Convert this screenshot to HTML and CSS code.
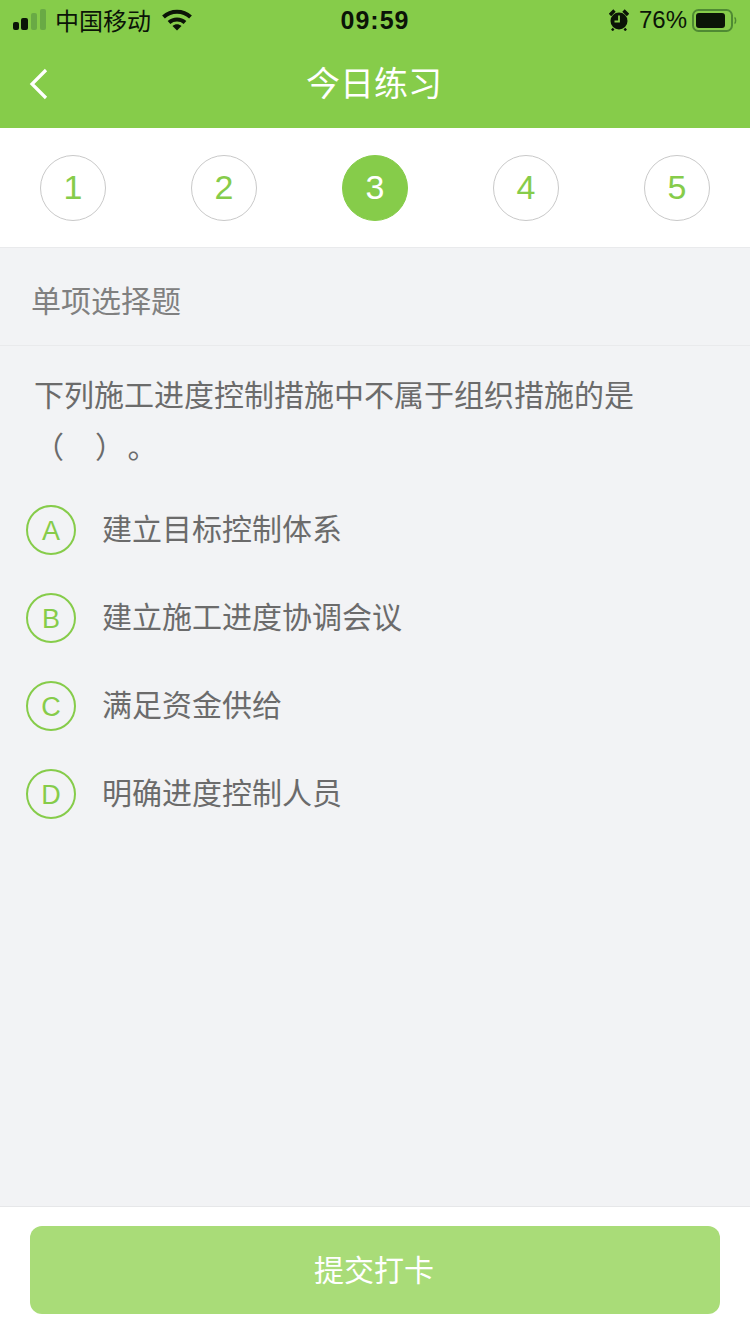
FILE: index.html
```html
<!DOCTYPE html>
<html lang="zh-CN">
<head>
  <meta charset="UTF-8" />
  <meta name="viewport" content="width=device-width, initial-scale=1.0"/>
  <title>今日练习</title>
  <link rel="stylesheet" href="styles.css">
</head>
<body>
  <div class="page">
    <header class="top">
      <!-- 状态栏 -->
      <div class="status">
        <div class="status-left">
          <svg class="signal" width="34" height="22" viewBox="0 0 34 22">
            <rect x="0" y="13" width="6" height="8" rx="2" fill="#0b1407"/>
            <rect x="8" y="9" width="7" height="12" rx="2" fill="#0b1407"/>
            <rect x="18" y="4" width="6" height="17" rx="2" fill="#69aa45"/>
            <rect x="27" y="0" width="6" height="21" rx="2" fill="#69aa45"/>
          </svg>
          <span class="carrier">中国移动</span>
          <svg class="wifi" width="30" height="22" viewBox="0 0 30 22">
            <path d="M1.500 8C9 1 21 1 28.500 8" fill="none" stroke="#0b1407" stroke-width="4"/>
            <path d="M7 13.500C11.500 9.500 18.500 9.500 23 13.500" fill="none" stroke="#0b1407" stroke-width="4"/>
            <path d="M10.500 17C13.300 14.800 16.700 14.800 19.500 17L15 21.500Z" fill="#0b1407"/>
          </svg>
        </div>
        <span class="time">09:59</span>
        <div class="status-right">
          <svg class="alarm" width="20" height="22" viewBox="0 0 20 22">
            <circle cx="10" cy="12" r="8.500" fill="#0b1407"/>
            <path d="M10 6.500V12.500H5.500" fill="none" stroke="#86cc4a" stroke-width="1.800"/>
            <path d="M1 6L5.500 1.500M19 6L14.500 1.500" stroke="#0b1407" stroke-width="3.400"/>
            <path d="M4.500 19.500L3 21.500M15.500 19.500L17 21.500" stroke="#0b1407" stroke-width="2.400"/>
          </svg>
          <span class="battery-text">76%</span>
          <svg class="battery" width="45" height="23" viewBox="0 0 45 23">
            <rect x="1" y="1" width="39" height="21" rx="5.500" fill="none" stroke="#4f8a33" stroke-width="2"/>
            <rect x="4" y="4" width="29" height="15" rx="3" fill="#0b1407"/>
            <path d="M42.500 8.500C44 9 44 14 42.500 14.500" fill="none" stroke="#4f8a33" stroke-width="1.500"/>
          </svg>
        </div>
      </div>
      <!-- 导航 -->
      <div class="nav">
        <svg class="back" width="22" height="32" viewBox="0 0 22 32">
          <path d="M18 2L4 16L18 30" fill="none" stroke="#fff" stroke-width="3.200"/>
        </svg>
        <h1 class="nav-title">今日练习</h1>
      </div>
    </header>

    <div class="steps">
      <span class="step">1</span>
      <span class="step">2</span>
      <span class="step step-on">3</span>
      <span class="step">4</span>
      <span class="step">5</span>
    </div>

    <main class="content">
      <div class="q-type">单项选择题</div>
      <p class="q-text">下列施工进度控制措施中不属于组织措施的是<br>（&nbsp;&nbsp;&nbsp;&thinsp;）&#8202;。</p>
      <ul class="options">
        <li class="option"><span class="letter">A</span><span class="option-text">建立目标控制体系</span></li>
        <li class="option"><span class="letter">B</span><span class="option-text">建立施工进度协调会议</span></li>
        <li class="option"><span class="letter">C</span><span class="option-text">满足资金供给</span></li>
        <li class="option"><span class="letter">D</span><span class="option-text">明确进度控制人员</span></li>
      </ul>
    </main>

    <footer class="bottom">
      <button class="submit">提交打卡</button>
    </footer>
  </div>
</body>
</html>
```

FILE: styles.css
```css
* {
  box-sizing: border-box;
}
html, body {
  margin: 0;
  padding: 0;
}
body {
  font-family: "Liberation Sans", "Noto Sans CJK SC", sans-serif;
  background: #f2f3f5;
}
.page {
  width: 750px;
  height: 1334px;
  display: flex;
  flex-direction: column;
  overflow: hidden;
}

/* 顶部 */
.top {
  height: 128px;
  background: #86cc4a;
}
.status {
  height: 40px;
  padding: 0 13px;
  display: grid;
  grid-template-columns: 1fr auto 1fr;
  align-items: center;
  color: #0b1407;
}
.status-left, .status-right {
  display: flex;
  align-items: center;
}
.status-right {
  justify-content: flex-end;
}
.signal {
  margin-right: 8px;
}
.carrier {
  font-size: 24px;
  margin-right: 11px;
  padding-bottom: 2px;
}
.time {
  font-size: 25px;
  font-weight: bold;
  letter-spacing: 1px;
}
.alarm {
  margin-right: 10px;
}
.battery-text {
  font-size: 24px;
  margin-right: 5px;
}
.nav {
  height: 88px;
  padding: 0 2px 6px 0;
  position: relative;
  display: flex;
  align-items: center;
  justify-content: center;
}
.back {
  position: absolute;
  left: 28px;
  top: 28px;
}
.nav-title {
  margin: 0;
  font-size: 34px;
  font-weight: normal;
  color: #fff;
}

/* 题号 */
.steps {
  height: 120px;
  padding: 1px 40px 0;
  background: #fff;
  border-bottom: 1px solid #e9eaec;
  display: flex;
  justify-content: space-between;
  align-items: center;
}
.step {
  width: 66px;
  height: 66px;
  padding-bottom: 2px;
  border: 1px solid #c9c9c9;
  border-radius: 50%;
  color: #86cc4a;
  font-size: 34px;
  display: flex;
  align-items: center;
  justify-content: center;
}
.step-on {
  background: #86cc4a;
  border-color: #86cc4a;
  color: #fff;
}

/* 题目 */
.content {
  flex: 1;
}
.q-type {
  height: 98px;
  padding: 5px 0 0 31px;
  border-bottom: 1px solid #e9eaec;
  display: flex;
  align-items: center;
  font-size: 30px;
  color: #808080;
}
.q-text {
  margin: 0;
  padding: 24px 34px 0;
  font-size: 30px;
  line-height: 52px;
  color: #6b6b6b;
}
.options {
  list-style: none;
  margin: 0;
  padding: 12px 0 0 26px;
}
.option {
  height: 88px;
  display: flex;
  align-items: center;
  font-size: 30px;
  color: #6b6b6b;
}
.option-text {
  margin-bottom: 6px;
}
.letter {
  width: 50px;
  height: 50px;
  margin-right: 26px;
  padding-top: 2px;
  border: 2px solid #86cc4a;
  border-radius: 50%;
  color: #86cc4a;
  font-size: 27px;
  display: flex;
  align-items: center;
  justify-content: center;
}

/* 底部 */
.bottom {
  height: 128px;
  padding: 19px 30px 0;
  background: #fff;
  border-top: 1px solid #e6e7e9;
}
.submit {
  display: block;
  width: 100%;
  height: 88px;
  padding: 0 2px 4px 0;
  border: none;
  border-radius: 12px;
  background: #a9dc78;
  color: #fff;
  font-family: inherit;
  font-size: 30px;
}
```
